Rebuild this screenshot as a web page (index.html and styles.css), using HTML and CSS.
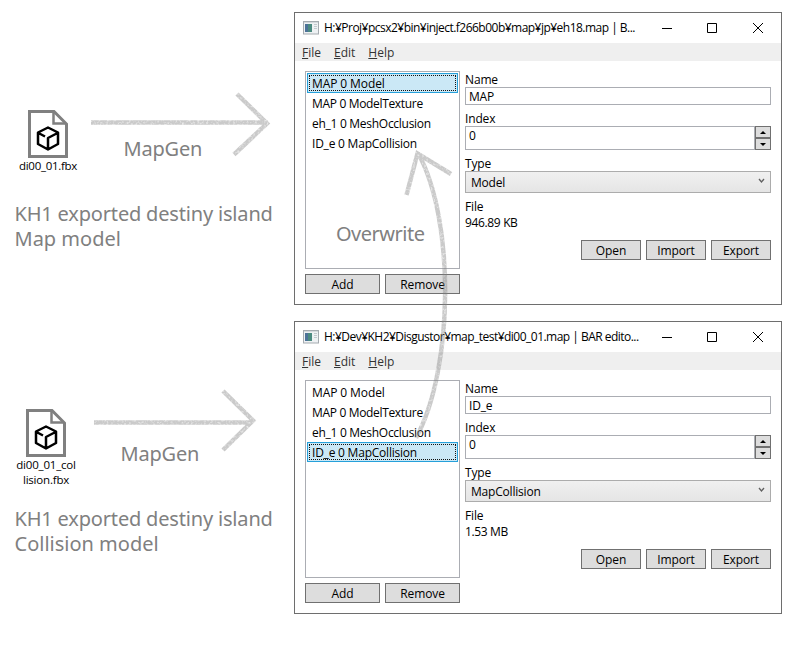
FILE: index.html
```html
<!DOCTYPE html>
<html lang="en">
<head>
<meta charset="utf-8">
<title>MapGen workflow</title>
<link rel="stylesheet" href="styles.css">
</head>
<body>
<svg class="defs" width="0" height="0" aria-hidden="true">
  <defs>
    <symbol id="fbx" viewBox="0 0 40 48">
      <path d="M1.500 1.500H26L38.500 14V46.500H1.500Z" fill="#fff" stroke="#808080" stroke-width="3"/>
      <path d="M25.500 2V13.500H38" fill="none" stroke="#808080" stroke-width="2.500"/>
      <path d="M20 17.500L30 22.500V34L20 39.500L10 34V22.500ZM10.500 23L17 26.500M29.500 23L20 28V39" fill="none" stroke="#000" stroke-width="2.500" stroke-linejoin="round"/>
    </symbol>
    <symbol id="app" viewBox="0 0 16 14">
      <rect x=".5" y=".5" width="15" height="12.500" fill="#eef1f3" stroke="#a5abb0"/>
      <path d="M1 1.500H15" stroke="#d5d9dd"/>
      <rect x="2" y="3" width="7" height="8" fill="#4b8a80"/>
      <path d="M2 3H5V11H2Z" fill="#4c7298"/>
      <path d="M11 3.500H14M11 5.500H14M11 7.500H14" stroke="#c3c9cf"/>
    </symbol>
    <filter id="chalk" x="-5%" y="-5%" width="110%" height="110%" filterUnits="objectBoundingBox">
      <feTurbulence type="fractalNoise" baseFrequency=".45" numOctaves="2" seed="4" result="n"/>
      <feColorMatrix in="n" type="matrix" values="0 0 0 0 0  0 0 0 0 0  0 0 0 0 0  1.600 0 0 0 .15" result="a"/>
      <feComposite in="SourceGraphic" in2="a" operator="in"/>
    </filter>
  </defs>
</svg>

<main class="canvas">
  <figure class="file file-map">
    <svg class="file-icon"><use href="#fbx"/></svg>
    <figcaption>di00_01.fbx</figcaption>
  </figure>
  <p class="note gen-map">MapGen</p>
  <p class="note desc-map">KH1 exported destiny island<br><span class="l2">Map model</span></p>

  <figure class="file file-col">
    <svg class="file-icon"><use href="#fbx"/></svg>
    <figcaption>di00_01_col<br>lision.fbx</figcaption>
  </figure>
  <p class="note gen-col">MapGen</p>
  <p class="note desc-col">KH1 exported destiny island<br><span class="l2">Collision model</span></p>

  <section class="window win-map">
    <header class="titlebar">
      <svg class="app-icon"><use href="#app"/></svg>
      <span class="title">H:¥Proj¥pcsx2¥bin¥inject.f266b00b¥map¥jp¥eh18.map | B...</span>
      <svg class="controls" viewBox="0 0 102 12"><path d="M0 6.500H10M45.500 1.500H54.500V10.500H45.500ZM91 1L101 11M101 1L91 11" fill="none" stroke="#000"/></svg>
    </header>
    <nav class="menu"><span><u>F</u>ile</span><span><u>E</u>dit</span><span><u>H</u>elp</span></nav>
    <div class="body">
      <div class="left">
        <ul class="list">
          <li class="selected"><span class="i1">MAP 0 Model</span></li>
          <li><span class="i2">MAP 0 ModelTexture</span></li>
          <li><span class="i3">eh_1 0 MeshOcclusion</span></li>
          <li><span class="i4">ID_e 0 MapCollision</span></li>
        </ul>
        <div class="row"><div class="btn wide">Add</div><div class="btn wide">Remove</div></div>
      </div>
      <div class="right">
        <label>Name</label>
        <div class="input">MAP</div>
        <label>Index</label>
        <div class="spin"><div class="num">0</div><div class="arrows"><i class="up"></i><i class="down"></i></div></div>
        <label>Type</label>
        <div class="combo"><span>Model</span><svg class="chev" viewBox="0 0 7 6"><path d="M1 1L3.500 4L6 1" fill="none" stroke="#606060" stroke-width="1.300"/></svg></div>
        <label>File</label>
        <div class="size">946.89 KB</div>
        <div class="row end"><div class="btn">Open</div><div class="btn">Import</div><div class="btn">Export</div></div>
      </div>
    </div>
  </section>

  <section class="window win-col">
    <header class="titlebar">
      <svg class="app-icon"><use href="#app"/></svg>
      <span class="title">H:¥Dev¥KH2¥Disgustor¥map_test¥di00_01.map | BAR edito...</span>
      <svg class="controls" viewBox="0 0 102 12"><path d="M0 6.500H10M45.500 1.500H54.500V10.500H45.500ZM91 1L101 11M101 1L91 11" fill="none" stroke="#000"/></svg>
    </header>
    <nav class="menu"><span><u>F</u>ile</span><span><u>E</u>dit</span><span><u>H</u>elp</span></nav>
    <div class="body">
      <div class="left">
        <ul class="list">
          <li><span class="i1">MAP 0 Model</span></li>
          <li><span class="i2">MAP 0 ModelTexture</span></li>
          <li><span class="i3">eh_1 0 MeshOcclusion</span></li>
          <li class="selected"><span class="i4">ID_e 0 MapCollision</span></li>
        </ul>
        <div class="row"><div class="btn wide">Add</div><div class="btn wide">Remove</div></div>
      </div>
      <div class="right">
        <label>Name</label>
        <div class="input">ID_e</div>
        <label>Index</label>
        <div class="spin"><div class="num">0</div><div class="arrows"><i class="up"></i><i class="down"></i></div></div>
        <label>Type</label>
        <div class="combo"><span>MapCollision</span><svg class="chev" viewBox="0 0 7 6"><path d="M1 1L3.500 4L6 1" fill="none" stroke="#606060" stroke-width="1.300"/></svg></div>
        <label>File</label>
        <div class="size">1.53 MB</div>
        <div class="row end"><div class="btn">Open</div><div class="btn">Import</div><div class="btn">Export</div></div>
      </div>
    </div>
  </section>

  <p class="note overwrite">Overwrite</p>

  <svg class="arrows-layer" viewBox="0 0 809 645">
    <g fill="none" stroke="#808080" stroke-opacity=".42" stroke-width="4.500">
      <path filter="url(#chalk)" d="M237 94L267 123.500L234 154.500M268 122.600L91 122.500"/>
      <path filter="url(#chalk)" d="M223 391L253 420.500L223 450M251 422.600L94 422.500"/>
      <path filter="url(#chalk)" d="M406.500 195L417.500 153.500L451 174M418 153C455 220 454 368 416 438"/>
    </g>
  </svg>
</main>
</body>
</html>
```
FILE: styles.css
```css
* { box-sizing: border-box; }
body { margin: 0; background: #fff; font: 12px/16px "Open Sans", "Noto Sans", sans-serif; color: #000; }
p, figure, ul { margin: 0; padding: 0; }
.defs { position: absolute; }
.canvas { position: relative; width: 809px; height: 645px; overflow: hidden; }

.file { position: absolute; width: 80px; display: flex; flex-direction: column; align-items: center; text-align: center; font-size: 11.500px; line-height: 15px; letter-spacing: -.3px; }
.file-icon { width: 40px; height: 48px; }
.file-map { left: 8px; top: 110px; }
.file-col { left: 6px; top: 409px; }
.file-col figcaption { letter-spacing: -.2px; }

.note { position: absolute; color: #808080; font: 20px/25px "Noto Sans", sans-serif; white-space: nowrap; letter-spacing: -.18px; }
.gen-map { left: 123.500px; top: 136px; }
.gen-col { left: 120.500px; top: 441px; }
.desc-map { left: 14.500px; top: 201px; }
.desc-col { left: 14.500px; top: 506px; }
.l2 { letter-spacing: 0; }
.overwrite { left: 336px; top: 221px; letter-spacing: -.5px; }

.window { position: absolute; left: 294px; width: 488px; height: 293px; background: #fff; border: 1px solid #6e6e6e; }
.win-map { top: 12px; }
.win-col { top: 321px; }
.titlebar { height: 30px; display: flex; align-items: center; padding-left: 8px; }
.app-icon { width: 16px; height: 14px; }
.title { width: 322px; margin-left: 5px; white-space: nowrap; letter-spacing: -.52px; }
.controls { width: 102px; height: 12px; margin-left: 16px; }
.menu { height: 18px; background: #efefef; display: flex; gap: 13px; padding-left: 7px; line-height: 19px; color: #333; }
.body { display: flex; gap: 5px; padding: 10px; }
.left { width: 155px; }
.list { height: 198px; border: 1px solid #abadb3; padding: 1px; list-style: none; margin-bottom: 5px; }
.list li { height: 20px; padding: 1px 4px; line-height: 18px; border: 1px solid transparent; white-space: nowrap; }
.list .selected { border-color: #26a0da; background: #cbe8f6; outline: 1px dotted #111; outline-offset: -3px; }
.i1 { letter-spacing: -.1px; }
.i2 { letter-spacing: -.33px; }
.i3 { letter-spacing: -.28px; }
.i4 { letter-spacing: -.22px; }
.row { display: flex; gap: 5px; }
.end { justify-content: flex-end; margin-top: 10px; }
.btn { width: 60px; height: 20px; border: 1px solid #707070; background: #ddd; text-align: center; line-height: 20px; letter-spacing: -.1px; }
.wide { width: 75px; }
.right { width: 306px; display: flex; flex-direction: column; }
label, .size { height: 16px; line-height: 18px; letter-spacing: -.15px; }
.size { letter-spacing: -.35px; }
.input { height: 18px; border: 1px solid #abadb3; padding-left: 3px; margin-bottom: 5px; line-height: 17px; letter-spacing: -.2px; }
.spin { display: flex; height: 24px; margin-bottom: 5px; }
.num { flex: 1; border: 1px solid #abadb3; padding-left: 3px; line-height: 18px; }
.arrows { width: 16px; display: flex; flex-direction: column; }
.arrows i { height: 12px; border: 1px solid #707070; background: #ddd; display: flex; align-items: center; justify-content: center; }
.arrows i::before { content: ""; border: solid transparent; border-width: 0 3px 3px; border-bottom-color: #000; }
.arrows .down::before { border-width: 3px 3px 0; border-top-color: #000; }
.combo { height: 22px; border: 1px solid #acacac; background: linear-gradient(#f0f0f0, #e5e5e5); margin-bottom: 5px; padding: 0 5px; display: flex; justify-content: space-between; line-height: 22px; letter-spacing: -.2px; }
.chev { width: 7px; height: 6px; margin-top: 6px; }
.arrows-layer { position: absolute; left: 0; top: 0; width: 809px; height: 645px; pointer-events: none; }
```
